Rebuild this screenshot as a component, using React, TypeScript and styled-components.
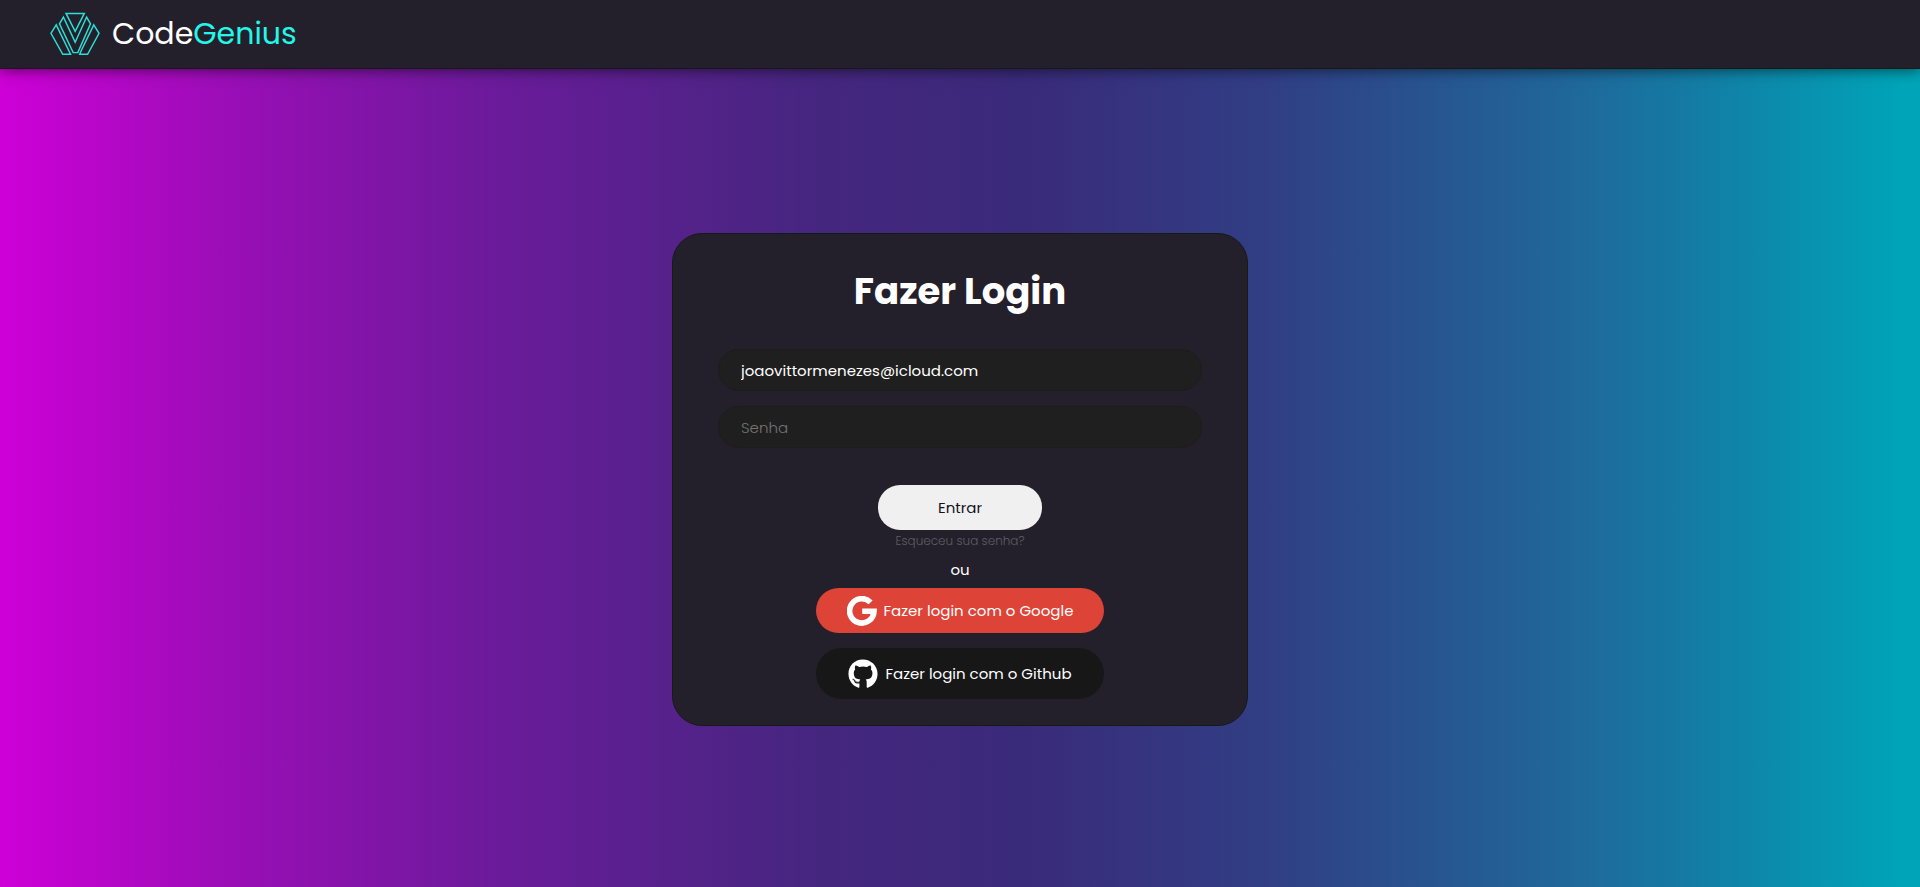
import React from "react";
import styled, { createGlobalStyle } from "styled-components";
import { FaGithub } from "react-icons/fa";

const GlobalStyle = createGlobalStyle`
  * { box-sizing: border-box; margin: 0; padding: 0; }
  body, button, input { font-family: Poppins, Inter, sans-serif; }
  body { color: #fff; font-size: 15px; }
`;

const Page = styled.div`
  min-height: 100vh;
  display: flex;
  flex-direction: column;
  background: linear-gradient(90deg, #ce00d7 0%, #9a0eb6 12%, #6a1b9a 26%, #462680 42%, #3a2a7a 53%, #313e84 66%, #1f689a 82%, #147ba4 88%, #00a4b8 99%);
`;

const Header = styled.header`
  display: flex;
  align-items: center;
  gap: 12px;
  height: 69px;
  padding: 0 50px;
  background: #24202b;
  border-bottom: 1px solid #161a15;
  box-shadow: 0 2px 12px rgba(0, 0, 0, 0.5);
`;

const BrandName = styled.span`
  font-size: 30px;
  line-height: 40px;
`;

const Accent = styled.span`
  color: #23f7ea;
`;

const Main = styled.main`
  flex: 1;
  display: flex;
  align-items: center;
  justify-content: center;
  padding-top: 3px;
`;

const Card = styled.form`
  display: flex;
  flex-direction: column;
  align-items: center;
  width: 30%;
  min-width: 400px;
  padding: 27px 45px 26px;
  background: #24202b;
  border: 1px solid #161a15;
  border-radius: 30px;
`;

const Title = styled.h1`
  font-size: 37px;
  line-height: 60px;
  font-weight: 700;
`;

const Fields = styled.div`
  display: flex;
  flex-direction: column;
  gap: 15px;
  width: 100%;
  margin: 28px 0 37px;
`;

const Field = styled.input`
  width: 100%;
  height: 42px;
  padding: 0 22px;
  border: 1px solid #1c1c1c;
  border-radius: 21px;
  background: #1f1f20;
  color: #fff;
  font-size: 15px;
  outline: none;
  &::placeholder { color: #757575; font-weight: 300; opacity: 1; }
`;

const SubmitButton = styled.button`
  width: 164px;
  height: 45px;
  border: 0;
  border-radius: 22px;
  background: #f0f0f0;
  color: #15131a;
  font-size: 15px;
`;

const ForgotLink = styled.a`
  color: #5f5c64;
  font-size: 12px;
  line-height: 20px;
  font-weight: 300;
  text-decoration: none;
  margin: 1px 0 7px;
`;

const Separator = styled.p`
  line-height: 24px;
  margin-bottom: 6px;
`;

const Providers = styled.div`
  display: flex;
  flex-direction: column;
  gap: 15px;
  width: 288px;
`;

const ProviderButton = styled.button<{ $color: string; $height: number }>`
  display: flex;
  align-items: center;
  justify-content: center;
  gap: 7px;
  height: ${(p) => p.$height}px;
  border: 0;
  border-radius: 26px;
  background: ${(p) => p.$color};
  color: #fff;
  font-size: 15px;
`;

const Logo = () => (
  <svg width="50" height="47" viewBox="0 0 153 141" fill="none" stroke="#28e0d8" strokeWidth="4.5" aria-hidden="true">
    <path d="M49 6H105L77 61Z" />
    <path d="M41 17L29 38L71 126H85L124 38L112 17L77 94Z" />
    <path d="M19 41L3 67L39 131H63L58 121Z" />
    <path d="M134 41L150 67L115 131H91L95 121Z" />
  </svg>
);

const GoogleIcon = () => (
  <svg width="30" height="30" viewBox="0 0 30 30" fill="none" stroke="#fff" strokeWidth="5.6" aria-hidden="true">
    <path d="M23.6 6.4A12.2 12.2 0 1 0 27 15.3H15.2" />
  </svg>
);

export default function App() {
  return (
    <>
      <GlobalStyle />
      <Page>
        <Header>
          <Logo />
          <BrandName>
            Code<Accent>Genius</Accent>
          </BrandName>
        </Header>
        <Main>
          <Card onSubmit={(e) => e.preventDefault()}>
            <Title>Fazer Login</Title>
            <Fields>
              <Field type="email" aria-label="Email" defaultValue="joaovittormenezes@icloud.com" />
              <Field type="password" aria-label="Senha" placeholder="Senha" />
            </Fields>
            <SubmitButton type="submit">Entrar</SubmitButton>
            <ForgotLink href="#senha">Esqueceu sua senha?</ForgotLink>
            <Separator>ou</Separator>
            <Providers>
              <ProviderButton type="button" $color="#dd4437" $height={45}>
                <GoogleIcon />
                Fazer login com o Google
              </ProviderButton>
              <ProviderButton type="button" $color="#171718" $height={51}>
                <FaGithub size={30} aria-hidden="true" />
                Fazer login com o Github
              </ProviderButton>
            </Providers>
          </Card>
        </Main>
      </Page>
    </>
  );
}
